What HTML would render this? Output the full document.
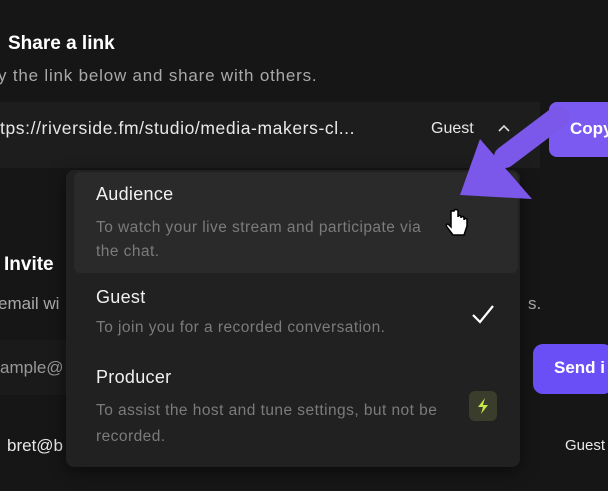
<!DOCTYPE html>
<html><head><style>
body{margin:0;width:608px;height:491px;background:#161616;position:relative;overflow:hidden;font-family:"Liberation Sans",sans-serif;color:#fff}
.a{position:absolute;white-space:nowrap}
.d{font-size:15.5px;color:#7b7b7b;letter-spacing:0.45px}
.h{font-size:18px;color:#f0f0f0;letter-spacing:0.3px}
</style></head><body>
<div class="a" style="left:8px;top:33px;font-size:19px;font-weight:bold">Share a link</div>
<div class="a" style="left:-2px;top:66px;font-size:17px;color:#a9a9a9;letter-spacing:0.8px">y the link below and share with others.</div>
<div class="a" style="left:0;top:102px;width:540px;height:66px;background:#1d1d1d"></div>
<div class="a" style="left:0;top:118px;font-size:17.5px;color:#e8e8e8;letter-spacing:0.6px">tps://riverside.fm/studio/media-makers-cl...</div>
<div class="a" style="left:431px;top:120px;font-size:16px;color:#e8e8e8">Guest</div>
<svg class="a" style="left:497px;top:123px" width="14" height="10"><path d="M2 8L7 3L12 8" stroke="#ddd" stroke-width="1.6" fill="none"/></svg>
<div class="a" style="left:549px;top:102px;width:70px;height:55px;background:#7a5af0;border-radius:8px"></div>
<div class="a" style="left:570px;top:119px;font-size:17px;font-weight:bold">Copy</div>
<div class="a" style="left:4px;top:254px;font-size:19px;font-weight:bold">Invite</div>
<div class="a" style="left:-2px;top:294px;font-size:17px;color:#a9a9a9">email wi</div>
<div class="a" style="left:528px;top:294px;font-size:17px;color:#a9a9a9">s.</div>
<div class="a" style="left:0;top:340px;width:66px;height:55px;background:#1a1a1a"></div>
<div class="a" style="left:0;top:358px;font-size:17px;color:#999">ample@</div>
<div class="a" style="left:533px;top:344px;width:80px;height:50px;background:#6b4ff6;border-radius:10px"></div>
<div class="a" style="left:554px;top:358px;font-size:17px;font-weight:bold">Send i</div>
<div class="a" style="left:7px;top:436px;font-size:17px;color:#e8e8e8">bret@b</div>
<div class="a" style="left:565px;top:437px;font-size:15px;color:#e8e8e8">Guest</div>
<div class="a" style="left:66px;top:170px;width:454px;height:297px;background:#212121;border-radius:8px;box-shadow:0 4px 16px rgba(0,0,0,.5)"></div>
<div class="a" style="left:74px;top:172px;width:444px;height:101px;background:#2a2a2a;border-radius:6px"></div>
<div class="a h" style="left:96px;top:184px">Audience</div>
<div class="a d" style="left:96px;top:216px;line-height:24px;white-space:normal;width:345px">To watch your live stream and participate via the chat.</div>
<div class="a h" style="left:96px;top:287px">Guest</div>
<div class="a d" style="left:96px;top:319px">To join you for a recorded conversation.</div>
<svg class="a" style="left:470px;top:303px" width="26" height="22"><path d="M3 12L10 19L23 3" stroke="#fff" stroke-width="2.2" fill="none"/></svg>
<div class="a h" style="left:96px;top:367px">Producer</div>
<div class="a d" style="left:96px;top:398px;line-height:26px;white-space:normal;width:365px">To assist the host and tune settings, but not be recorded.</div>
<div class="a" style="left:469px;top:391px;width:28px;height:30px;background:#3b3d2c;border-radius:6px"></div>
<svg class="a" style="left:475px;top:397px" width="16" height="18"><path d="M10 1L3 10H8L6 17L13 8H8Z" fill="#c7e84a"/></svg>
<svg class="a" style="left:440px;top:95px" width="140" height="110"><line x1="118" y1="22" x2="65" y2="62" stroke="#7b58ea" stroke-width="22" stroke-linecap="round"/><path d="M40 44L20 100L92 104Z" fill="#7b58ea"/></svg>
<svg class="a" style="left:444px;top:208px" width="26" height="34"><path d="M7 3v16l-3-3c-2 0-2 2-1 3l6 8h11l3-9v-6c0-2-3-2-3 0v-2c0-2-3-2-3 0v-1c0-2-3-2-3 0V3c0-2-4-2-4 0z" fill="#fff" stroke="#000" stroke-width="1.5"/></svg>
</body></html>
